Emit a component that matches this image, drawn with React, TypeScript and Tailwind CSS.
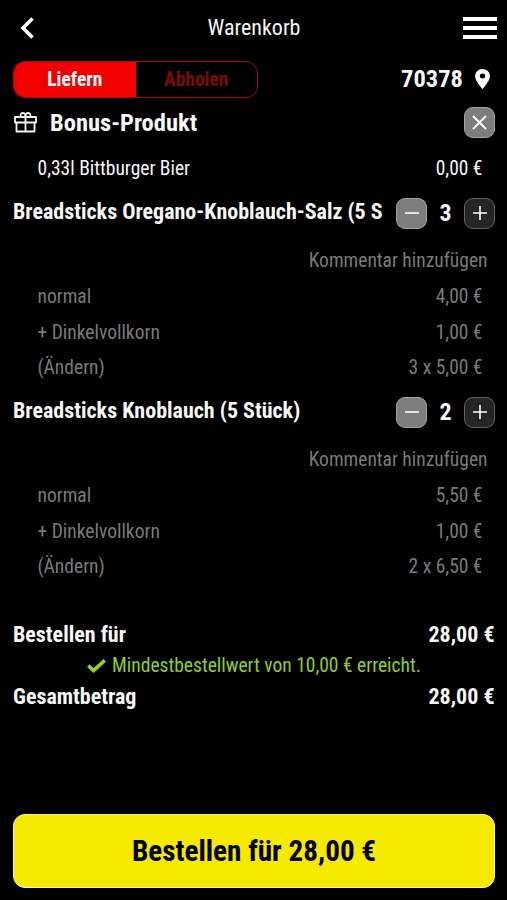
import { useState } from 'react'

const BONUS = { name: '0,33l Bittburger Bier', price: 0 }

const ITEMS = [
  { name: 'Breadsticks Oregano-Knoblauch-Salz (5 S', qty: 3, base: 4, extra: 1 },
  { name: 'Breadsticks Knoblauch (5 Stück)',         qty: 2, base: 5.5, extra: 1 },
]

const MIN_ORDER = 10

const euro = (n: number) => `${n.toFixed(2).replace('.', ',')} €`

const squareCls = 'flex h-[31px] w-[31px] shrink-0 items-center justify-center rounded-[9px] border'
const lightCls  = 'border-[#a2a2a2] bg-[#7d7d7d]'
const darkCls   = 'border-[#626262] bg-[#252525]'

function Header() {
  return (
    <header className="flex h-14 items-center justify-between">
      <button aria-label="Zurück" className="ml-[7px] w-[89px]">
        <svg width="14" height="22" viewBox="0 0 14 22" fill="none" stroke="#fff" strokeWidth="3.6"><path d="M12.5 1.5 3 11l9.5 9.5" /></svg>
      </button>
      <h1 className="pb-px text-[22px]">Warenkorb</h1>
      <button aria-label="Menü" className="-mr-[2px] flex w-[98px] flex-col items-end gap-[5px]">
        <span className="h-1 w-[34px] bg-white" />
        <span className="h-1 w-[34px] bg-white" />
        <span className="h-1 w-[34px] bg-white" />
      </button>
    </header>
  )
}

function LineRow({ label, value }: { label: string; value: string }) {
  return (
    <div className="flex h-[35.5px] items-center justify-between pl-[24.5px] pr-[12.5px] pt-px text-[19.5px]">
      <span>{label}</span>
      <span>{value}</span>
    </div>
  )
}

export default function App() {
  const [mode, setMode] = useState<'deliver' | 'pickup'>('deliver')
  const [qtys, setQtys] = useState(ITEMS.map((i) => i.qty))

  const total = ITEMS.reduce((sum, it, i) => sum + qtys[i] * (it.base + it.extra), 0)
  const change = (idx: number, by: number) => setQtys((q) => q.map((n, i) => (i === idx ? Math.max(1, n + by) : n)))

  const tabCls = (active: boolean) => `flex-1 pt-px text-[19.5px] font-bold ${active ? 'bg-[#f20000] text-white' : 'text-[#7b0d08]'}`

  return (
    <main className="flex h-[900px] w-[507px] flex-col overflow-hidden whitespace-nowrap bg-black pl-[13px] pr-3 font-['Roboto_Condensed','Roboto',sans-serif] text-[#f7f7f7] [font-stretch:75%]">
      <Header />

      <div className="mt-[5px] flex h-[37px] items-center justify-between">
        <div className="flex h-full w-[245px] overflow-hidden rounded-xl border-[1.5px] border-[#a80b08]">
          <button className={tabCls(mode === 'deliver')} onClick={() => setMode('deliver')}>Liefern</button>
          <button className={tabCls(mode === 'pickup')} onClick={() => setMode('pickup')}>Abholen</button>
        </div>
        <div className="flex items-center gap-3 pr-[5px] text-[24.5px] font-bold">
          <span>70378</span>
          <svg className="mb-px" width="15" height="20" viewBox="0 0 14 20" preserveAspectRatio="none" fill="#fff"><path fillRule="evenodd" d="M7 0a7 7 0 0 0-7 7c0 5 7 13 7 13s7-8 7-13a7 7 0 0 0-7-7Zm0 4.500a2.500 2.500 0 1 1 0 5 2.500 2.500 0 0 1 0-5Z" /></svg>
        </div>
      </div>

      <div className="mt-[9px] flex h-[31px] items-center">
        <svg className="ml-px" width="23" height="21" viewBox="0 0 23 21" fill="none" stroke="#f4f4f4" strokeWidth="1.8" strokeLinejoin="round">
          <path d="M1 5h21v5.500H1zM2.500 10.500h18v9h-18zM11.500 5v14.500" />
          <path d="M11.500 5c0-2.500-1-4-2.700-4C6.800 1 6 3 7 5M11.500 5c0-2.500 1-4 2.700-4C16.200 1 17 3 16 5" />
        </svg>
        <h2 className="ml-[13px] flex-1 pt-px text-[24.5px] font-bold">Bonus-Produkt</h2>
        <button aria-label="Entfernen" className={`${squareCls} ${lightCls}`}>
          <svg width="15" height="15" viewBox="0 0 15 15" stroke="#fff" strokeWidth="1.8"><path d="m1 1 13 13M14 1 1 14" /></svg>
        </button>
      </div>
      <div className="mt-3 mb-3">
        <LineRow label={BONUS.name} value={euro(BONUS.price)} />
      </div>

      {ITEMS.map((it, i) => (
        <section key={it.name} className="h-[199px] text-[#7a7a7a]">
          <div className="flex h-[31px] items-center text-[#f7f7f7]">
            <h3 className="min-w-0 flex-1 overflow-hidden pb-[3px] text-[22px] font-bold">{it.name}</h3>
            <button aria-label="Weniger" className={`${squareCls} ${lightCls}`} onClick={() => change(i, -1)}>
              <svg width="14" height="14" viewBox="0 0 14 14" stroke="#fff" strokeWidth="1.6"><path d="M0 7h14" /></svg>
            </button>
            <span className="w-[37px] text-center text-[24px] font-bold">{qtys[i]}</span>
            <button aria-label="Mehr" className={`${squareCls} ${darkCls}`} onClick={() => change(i, 1)}>
              <svg width="14" height="14" viewBox="0 0 14 14" stroke="#fff" strokeWidth="1.6"><path d="M0 7h14M7 0v14" /></svg>
            </button>
          </div>
          <div className="mt-[13px] flex h-[37px] items-center justify-end pt-[2px] pr-[7.5px] text-[19.5px]">Kommentar hinzufügen</div>
          <LineRow label="normal" value={euro(it.base)} />
          <LineRow label="+ Dinkelvollkorn" value={euro(it.extra)} />
          <LineRow label="(Ändern)" value={`${qtys[i]} x ${euro(it.base + it.extra)}`} />
        </section>
      ))}

      <div className="mt-[23px] flex h-8 items-center justify-between pr-[0.5px] text-[22px] font-bold">
        <span>Bestellen für</span>
        <span>{euro(total)}</span>
      </div>
      <div className="flex h-[31px] items-center justify-center gap-[6px] text-[19.5px] text-[#95ce17]">
        <svg width="19" height="14" viewBox="0 0 19 14" fill="none" stroke="#95d514" strokeWidth="3.6"><path d="m1.300 6.500 5.200 5L17.700 1.300" /></svg>
        <span>Mindestbestellwert von {euro(MIN_ORDER)} erreicht.</span>
      </div>
      <div className="flex h-8 items-center justify-between pr-[0.5px] pb-[2px] text-[22px] font-bold">
        <span>Gesamtbetrag</span>
        <span>{euro(total)}</span>
      </div>

      <button className="mt-auto mb-3 h-[74px] rounded-xl border border-[#fbf582] bg-[#f5e900] pt-px text-[29.2px] font-bold text-black">
        Bestellen für {euro(total)}
      </button>
    </main>
  )
}
